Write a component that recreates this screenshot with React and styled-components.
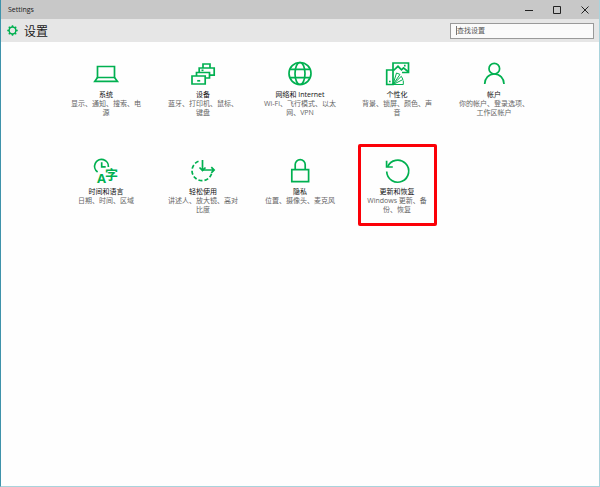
import React from "react";
import styled, { createGlobalStyle } from "styled-components";

const GlobalStyle = createGlobalStyle`
    * {
        box-sizing: border-box;
    }

    body {
        margin: 0;
        font-family: "Open Sans", "Noto Sans CJK SC", sans-serif;
        font-size: 7px;
        line-height: 9px;
        color: #1a1a1a;
        background: #fefefe;
    }
`;

const SystemIcon = () => (
    <>
        <path d="M4.5 4.5h17v11h-17z" />
        <path d="M4.5 15.5L1.8 19.3h22.6l-2.9-3.8" />
    </>
);

const DevicesIcon = () => (
    <>
        <path d="M13 6V2h7v4" />
        <path d="M9.2 10V6h15v7.2H20" />
        <path d="M11.5 8.3h2" />
        <path d="M6.5 14v-3.5h13V16H16" />
        <path d="M2 14h13.2v8H2z" />
        <path d="M7.2 18.8h3" />
    </>
);

const NetworkIcon = () => (
    <>
        <circle cx="13" cy="11.5" r="11" />
        <ellipse cx="13" cy="11.5" rx="5" ry="11" />
        <path d="M3 7.3h20M3 15.7h20" />
    </>
);

const PersonalIcon = () => (
    <>
        <path d="M9 8V1h15.5v9.5H18" />
        <path d="M9.5 8.5l4.5-4.2 3.5 3.5 2-2 5 4.2" />
        <path d="M20 3.6h1.6" />
        <path d="M2.7 8H9v14.5H2.7z" />
        <path d="M5 19.5h1.6" />
        <path d="M9 22.5l3.5-11.5 3.5 1.4L9 22.5l8.3-8.2 1.7 3.2L9 22.5h10.3v-4" strokeWidth="1" />
    </>
);

const AccountIcon = () => (
    <>
        <circle cx="13.3" cy="6.7" r="5.3" />
        <path d="M3.7 22c0-5.6 4-10 9.6-10s9.7 4.4 9.7 10" />
    </>
);

const LanguageIcon = () => (
    <>
        <path d="M4.6 13A6.9 6.9 0 1 1 15.4 8" />
        <path d="M8.7 3.2v4.6h4" />
        <Glyph x="8.5" y="23.5" $size={13}>A</Glyph>
        <Glyph x="18.6" y="19.5" $size={13}>字</Glyph>
    </>
);

const EaseIcon = () => (
    <>
        <path d="M8.5 2.3A10 10 0 1 0 21.6 14.5" strokeDasharray="4 2" />
        <path d="M12.5 1v10.5M9.5 8.5l3 3 3-3" />
        <path d="M12.5 11h11.5M21.3 8.2l2.8 2.8-2.8 2.8" />
    </>
);

const PrivacyIcon = () => (
    <>
        <path d="M4.8 10.7h16.8v12H4.8z" />
        <path d="M8.2 10.5V5.6a5 5 0 0 1 10 0v4.9" />
    </>
);

const UpdateIcon = () => (
    <>
        <path d="M3.6 7.8A11 11 0 1 1 2.7 12.5" />
        <path d="M2.6 1.8v6.2h6.2" />
    </>
);

const categories = [
    { title: "系统", description: "显示、通知、搜索、电源", Icon: SystemIcon },
    { title: "设备", description: "蓝牙、打印机、鼠标、键盘", Icon: DevicesIcon },
    { title: "网络和 Internet", description: "Wi-Fi、飞行模式、以太网、VPN", Icon: NetworkIcon },
    { title: "个性化", description: "背景、锁屏、颜色、声音", Icon: PersonalIcon },
    { title: "帐户", description: "你的帐户、登录选项、工作区帐户", Icon: AccountIcon },
    { title: "时间和语言", description: "日期、时间、区域", Icon: LanguageIcon },
    { title: "轻松使用", description: "讲述人、放大镜、高对比度", Icon: EaseIcon },
    { title: "隐私", description: "位置、摄像头、麦克风", Icon: PrivacyIcon },
    { title: "更新和恢复", description: "Windows 更新、备\n份、恢复", Icon: UpdateIcon, marked: true },
];

function App() {
    return (
        <Window lang="zh-CN">
            <GlobalStyle />
            <TitleBar>
                <WindowTitle>Settings</WindowTitle>
                <WindowButton aria-label="最小化">
                    <svg width="8" height="8" viewBox="0 0 8 8"><path d="M0 4.5h8" /></svg>
                </WindowButton>
                <WindowButton aria-label="最大化">
                    <svg width="8" height="8" viewBox="0 0 8 8"><path d="M.5.5h7v7h-7z" /></svg>
                </WindowButton>
                <WindowButton aria-label="关闭">
                    <svg width="8" height="8" viewBox="0 0 8 8"><path d="M.5.5l7 7M7.5.5l-7 7" /></svg>
                </WindowButton>
            </TitleBar>
            <Header>
                <Gear viewBox="0 0 22 22" aria-hidden="true">
                    <circle cx="11" cy="11" r="6.8" />
                    <path d="M11 4V.5M11 21.5V18M4 11H.5M21.5 11H18M6 6L3.6 3.6M18.4 18.4L16 16M6 16l-2.4 2.4M18.4 3.6L16 6" />
                </Gear>
                <Heading>设置</Heading>
                <SearchBox>
                    <SearchInput type="text" placeholder="查找设置" aria-label="查找设置" />
                </SearchBox>
            </Header>
            <Grid>
                {categories.map(({ title, description, Icon, marked }) => (
                    <Tile href="#" key={title} $marked={marked}>
                        <TileIcon viewBox="0 0 26 24" aria-hidden="true">
                            <Icon />
                        </TileIcon>
                        <TileTitle>{title}</TileTitle>
                        <TileText>{description}</TileText>
                    </Tile>
                ))}
            </Grid>
        </Window>
    );
}

export default App;

const Window = styled.div`
    min-height: 100vh;
    display: flex;
    flex-direction: column;
    border-left: 1px solid #3f93ab;
    border-right: 1px solid #a9d3dc;
    border-bottom: 1px solid #a9d3dc;
`;

const TitleBar = styled.div`
    display: flex;
    align-items: stretch;
    height: 19px;
    background: #c8c8c8;
`;

const WindowTitle = styled.span`
    flex: 1;
    padding-left: 7px;
    line-height: 19px;
`;

const WindowButton = styled.button`
    width: 28px;
    padding: 0;
    border: none;
    background: transparent;
    display: flex;
    align-items: center;
    justify-content: center;

    svg {
        fill: none;
        stroke: #222;
    }
`;

const Header = styled.header`
    display: flex;
    align-items: center;
    height: 23px;
    padding: 0 5px 0 6px;
    background: #e6e6e6;
`;

const Gear = styled.svg`
    width: 11px;
    height: 11px;
    fill: none;
    stroke: #00b050;
    stroke-width: 3;
`;

const Heading = styled.h1`
    flex: 1;
    margin: 0;
    padding: 1px 0 0 6px;
    font-size: 12px;
    line-height: 23px;
    font-weight: 400;
`;

const SearchBox = styled.div`
    position: relative;
    width: 144px;
    height: 16px;

    /* text cursor */
    &::before {
        content: "";
        position: absolute;
        left: 6px;
        top: 3px;
        width: 1px;
        height: 9px;
        background: #777;
    }
`;

const SearchInput = styled.input`
    display: block;
    width: 100%;
    height: 100%;
    padding: 0 6px;
    border: 1px solid #999;
    background: #fafafa;
    font: inherit;
    color: #444;
    outline: none;

    &::placeholder {
        color: #555;
        opacity: 1;
    }
`;

const Grid = styled.main`
    display: grid;
    grid-template-columns: repeat(auto-fit, 79px);
    justify-content: center;
    gap: 15px 18px;
    padding: 5px 56px;
`;

const Tile = styled.a`
    display: flex;
    flex-direction: column;
    align-items: center;
    min-height: 82px;
    padding: 15px 2px 12px;
    border-radius: 2px;
    text-align: center;
    text-decoration: none;
    color: #111;
    box-shadow: ${(props) => (props.$marked ? "inset 0 0 0 3px #fb0007" : "none")};
`;

const TileIcon = styled.svg`
    width: 26px;
    height: 24px;
    margin-bottom: 4px;
    fill: none;
    stroke: #00b050;
    stroke-width: 1.7;
    overflow: visible;
`;

const Glyph = styled.text`
    font-size: ${(props) => props.$size}px;
    font-weight: 700;
    text-anchor: middle;
    fill: #00b050;
    stroke: none;
`;

const TileTitle = styled.span`
    white-space: nowrap;
`;

const TileText = styled.span`
    color: #666;
    white-space: pre-line;
`;
